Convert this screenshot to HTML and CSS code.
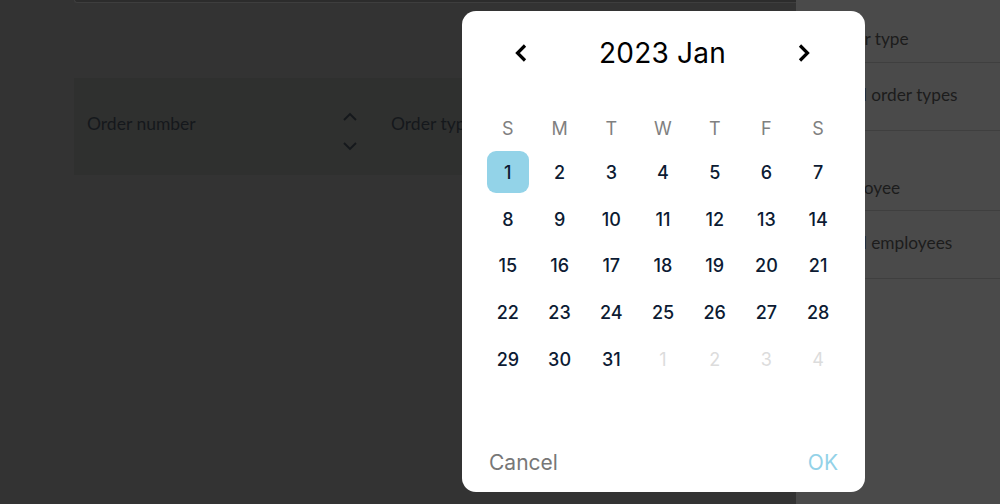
FILE: index.html
```html
<!DOCTYPE html>
<html>
<head>
  <title>Orders - Date picker</title>
  <link rel="stylesheet" href="styles.css">
</head>
<body>
<div class="page">
  <main class="main">
    <div class="search-box"></div>
    <div class="table-head">
      <div class="col col-number">
        <span class="col-title">Order number</span>
        <span class="sort">
          <svg width="16" height="10" viewBox="0 0 16 10"><polyline points="2,8 8,2 14,8"/></svg>
          <svg width="16" height="10" viewBox="0 0 16 10"><polyline points="2,2 8,8 14,2"/></svg>
        </span>
      </div>
      <div class="col col-type"><span class="col-title">Order type</span></div>
    </div>
  </main>

  <aside class="filters">
    <div class="filter-label">Order type</div>
    <div class="filter-value">All order types</div>
    <div class="filter-label second">Employee</div>
    <div class="filter-value">All employees</div>
  </aside>
</div>

<div class="picker">
  <div class="picker-head">
    <button class="nav-btn">
      <svg width="14" height="20" viewBox="0 0 14 20"><polyline points="11,2.5 3.5,10 11,17.5"/></svg>
    </button>
    <span class="month-year">2023 Jan</span>
    <button class="nav-btn">
      <svg width="14" height="20" viewBox="0 0 14 20"><polyline points="3,2.5 10.5,10 3,17.5"/></svg>
    </button>
  </div>

  <div class="weekdays">
    <span>S</span><span>M</span><span>T</span><span>W</span><span>T</span><span>F</span><span>S</span>
  </div>

  <div class="days">
    <span class="day"><b class="selected">1</b></span>
    <span class="day">2</span><span class="day">3</span><span class="day">4</span>
    <span class="day">5</span><span class="day">6</span><span class="day">7</span>
    <span class="day">8</span><span class="day">9</span><span class="day">10</span>
    <span class="day">11</span><span class="day">12</span><span class="day">13</span><span class="day">14</span>
    <span class="day">15</span><span class="day">16</span><span class="day">17</span>
    <span class="day">18</span><span class="day">19</span><span class="day">20</span><span class="day">21</span>
    <span class="day">22</span><span class="day">23</span><span class="day">24</span>
    <span class="day">25</span><span class="day">26</span><span class="day">27</span><span class="day">28</span>
    <span class="day">29</span><span class="day">30</span><span class="day">31</span>
    <span class="day other">1</span><span class="day other">2</span><span class="day other">3</span><span class="day other">4</span>
  </div>

  <div class="picker-foot">
    <button class="cancel">Cancel</button>
    <button class="ok">OK</button>
  </div>
</div>
</body>
</html>
```

FILE: styles.css
```css
body {
  margin: 0;
  background-color: #333333;
  font-family: Lato, "Noto Sans", sans-serif;
  overflow: hidden;
}

.page {
  display: flex;
  height: 504px;
}

.main {
  flex: 1;
  padding-left: 74px;
}

.search-box {
  height: 2px;
  background-color: #2c2c2c;
  border-bottom: 1px solid #3e3e3e;
  border-left: 1px solid #3e3e3e;
  border-bottom-left-radius: 4px;
}

.table-head {
  display: flex;
  margin-top: 75px;
  height: 97px;
  background-color: #2f302f;
  color: #15181c;
  font-size: 17.5px;
}

.col {
  display: flex;
  align-items: center;
}

.col-title {
  margin-bottom: 6px;
}

.col-number {
  width: 271px;
  padding-left: 13px;
  justify-content: space-between;
}

.col-type {
  padding-left: 33px;
}

.sort {
  display: flex;
  flex-direction: column;
  gap: 19px;
  margin-top: 10px;
}

.sort svg polyline {
  fill: none;
  stroke: #15181c;
  stroke-width: 1.8;
}

.filters {
  width: 204px;
  background-color: #4a4a4a;
  padding-top: 19px;
  color: #1c1c1c;
  font-size: 17.3px;
}

.filter-label {
  height: 43px;
  line-height: 40px;
  padding-left: 30px;
  border-bottom: 1px solid #3f3f3f;
}

.filter-label.second {
  margin-top: 35px;
  height: 44px;
  line-height: 44px;
}

.filter-value {
  height: 67px;
  line-height: 63px;
  padding-left: 51px;
  border-bottom: 1px solid #3f3f3f;
}

/* date picker dialog */
.picker {
  position: absolute;
  left: 462px;
  top: 11px;
  width: 403px;
  height: 481px;
  box-sizing: border-box;
  padding: 22px 21px 15px 20px;
  background: #ffffff;
  border-radius: 14px;
  display: flex;
  flex-direction: column;
  font-family: Inter, "Noto Sans", sans-serif;
}

.picker-head {
  display: flex;
  align-items: center;
  justify-content: space-between;
  height: 40px;
  padding: 0 33px 0 32px;
}

.nav-btn {
  border: none;
  background: none;
  padding: 0;
  display: flex;
}

.nav-btn polyline {
  fill: none;
  stroke: #000000;
  stroke-width: 3.2;
}

.month-year {
  font-size: 28px;
  color: #000000;
  letter-spacing: 0.2px;
}

.weekdays, .days {
  display: grid;
  grid-template-columns: repeat(7, 1fr);
  text-align: center;
}

.weekdays {
  margin-top: 34px;
  height: 42px;
  align-items: center;
  font-size: 18px;
  color: #808080;
}

.days {
  grid-auto-rows: 46.7px;
  font-size: 18px;
  font-weight: 500;
  color: #0c1b33;
}

.day {
  display: flex;
  align-items: center;
  justify-content: center;
}

.day.other {
  color: #dcdcdc;
  font-weight: 400;
}

.selected {
  display: flex;
  align-items: center;
  justify-content: center;
  width: 42px;
  height: 42px;
  border-radius: 9px;
  background-color: #93d3e8;
  font-weight: 500;
}

.picker-foot {
  margin-top: auto;
  display: flex;
  justify-content: space-between;
  align-items: center;
  height: 30px;
  padding: 0 6px 0 7px;
}

.picker-foot button {
  border: none;
  background: none;
  padding: 0;
  font-family: Inter, "Noto Sans", sans-serif;
  font-size: 21px;
}

.cancel {
  color: #777777;
}

.ok {
  color: #93d2e8;
}
```
